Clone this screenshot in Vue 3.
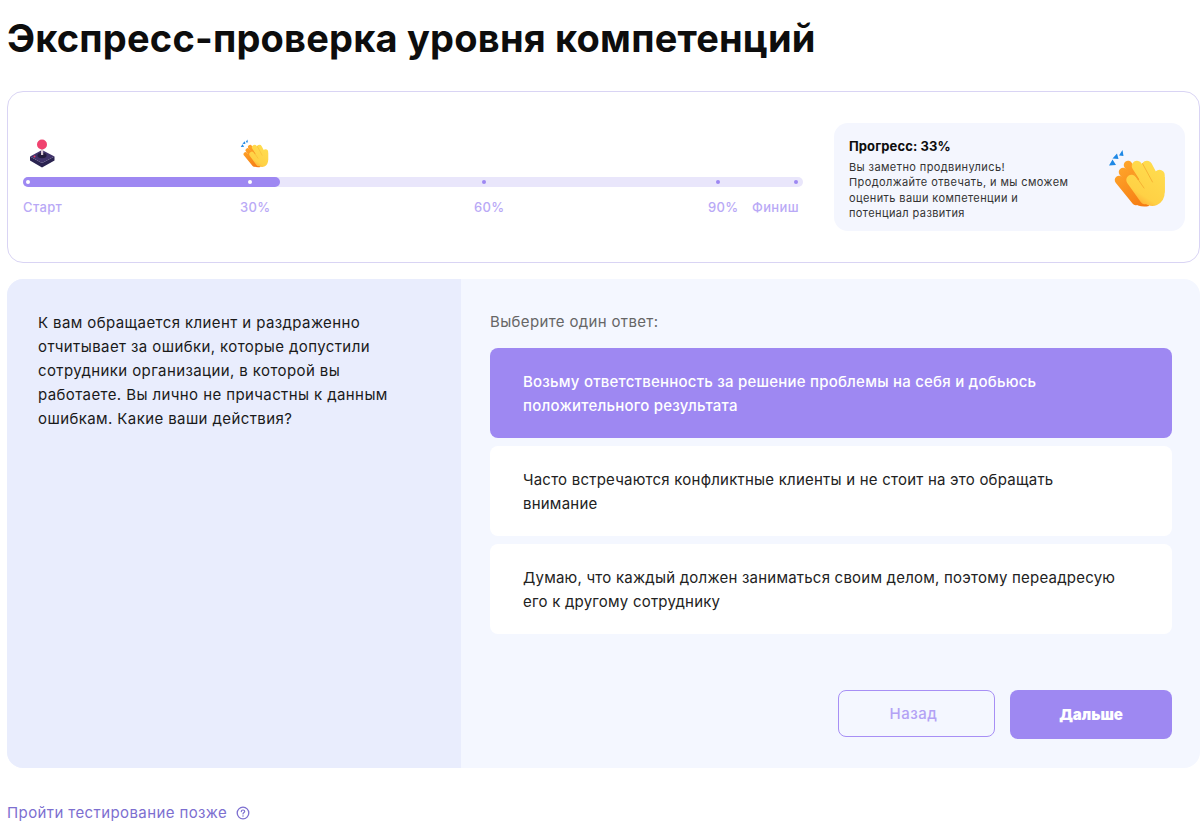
<template>
  <div class="page">
    <h1 class="title">Экспресс-проверка уровня компетенций</h1>

    <section class="progress-card">
      <div class="progress-main">
        <div class="marks">
          <svg class="joystick" width="25" height="29" viewBox="0 0 25 29">
            <path d="M0 17.500V21.500L12 28.500L24.500 21.500V17.500L12 24Z" fill="#2a2350" />
            <path d="M12 11L24.500 17.500L12 24L0 17.500Z" fill="#40336b" />
            <ellipse cx="12" cy="16.500" rx="4.500" ry="2.800" fill="#221b3d" />
            <rect x="11" y="9" width="2.200" height="7" fill="#d9c8d6" />
            <circle cx="4.500" cy="17.500" r="1" fill="#e8385f" />
            <circle cx="12" cy="5.500" r="5" fill="#f0436f" />
          </svg>
          <svg class="clap-small" width="30" height="29" viewBox="13 8 60 59">
            <defs>
              <linearGradient id="clapBack" gradientUnits="userSpaceOnUse" x1="22" y1="25" x2="52" y2="65">
                <stop offset="0" stop-color="#ffa62b" />
                <stop offset="1" stop-color="#f57a12" />
              </linearGradient>
              <linearGradient id="clapFront" gradientUnits="userSpaceOnUse" x1="64" y1="26" x2="38" y2="66">
                <stop offset="0" stop-color="#ffdc4e" />
                <stop offset="0.68" stop-color="#ffd145" />
                <stop offset="1" stop-color="#ff982c" />
              </linearGradient>
            </defs>
            <g id="clap">
              <path d="M14 24.500L21 24L17.500 18.500Z M17.500 17.500L23.500 18L22 12.500Z M24 14.500L28.500 15L27.500 9Z" fill="#1e88e5" />
              <g stroke="url(#clapBack)" stroke-width="8.500" stroke-linecap="round" fill="none">
                <path d="M33 24L47 44" />
                <path d="M28 31L43 50" />
                <path d="M24 39L41 60" />
              </g>
              <path d="M24 42L38 61Q44 67 54 65L50 34L36 32Z" fill="url(#clapBack)" />
              <g stroke="url(#clapFront)" stroke-width="10.500" stroke-linecap="round" fill="none">
                <path d="M42 25L54 44" />
                <path d="M52 25L62 44" />
                <path d="M64.500 34V50" />
                <path d="M36.500 39L50 58" />
              </g>
              <path d="M36 44L48 61Q55 67 62 64Q70 60 69.750 50L69.750 36L60 36L48 36Z" fill="url(#clapFront)" />
              <path d="M39 32.500L49 47M47.500 22.500L57.500 41" stroke="#f4a92f" stroke-width="0.800" stroke-linecap="round" fill="none" />
            </g>
          </svg>
        </div>

        <div class="track">
          <div class="track-fill"></div>
          <span
            v-for="dot in dots"
            :key="dot.x"
            class="dot"
            :class="{ passed: dot.passed }"
            :style="{ left: dot.x + 'px' }"
          ></span>
        </div>

        <div class="labels">
          <span>Старт</span>
          <span>30%</span>
          <span>60%</span>
          <span>90%</span>
          <span>Финиш</span>
        </div>
      </div>

      <aside class="progress-note">
        <div class="note-text">
          <h2>Прогресс: 33%</h2>
          <p>Вы заметно продвинулись!<br />Продолжайте отвечать, и мы сможем оценить ваши компетенции и потенциал развития</p>
        </div>
        <svg class="clap-big" width="60" height="59" viewBox="13 8 60 59">
          <use href="#clap" />
        </svg>
      </aside>
    </section>

    <section class="quiz">
      <div class="question">
        К вам обращается клиент и раздраженно отчитывает за ошибки, которые допустили сотрудники организации, в которой вы работаете. Вы лично не причастны к данным ошибкам. Какие ваши действия?
      </div>
      <div class="answers">
        <p class="hint">Выберите один ответ:</p>
        <div class="options">
          <div
            v-for="(option, i) in options"
            :key="i"
            class="option"
            :class="{ active: i === selected }"
            @click="selected = i"
          >
            {{ option }}
          </div>
        </div>
        <div class="actions">
          <button class="btn-back">Назад</button>
          <button class="btn-next">Дальше</button>
        </div>
      </div>
    </section>

    <a class="later">
      Пройти тестирование позже
      <svg width="14" height="14" viewBox="0 0 14 14" fill="none">
        <circle cx="7" cy="7" r="5.800" stroke="#7d6fd0" stroke-width="1.300" />
        <path d="M5.300 5.600C5.300 4.600 6 4 7 4C8 4 8.700 4.600 8.700 5.500C8.700 6.500 7 6.700 7 8" stroke="#7d6fd0" stroke-width="1.200" stroke-linecap="round" />
        <circle cx="7" cy="9.900" r="0.750" fill="#7d6fd0" />
      </svg>
    </a>
  </div>
</template>

<script setup>
import { ref } from "vue";

const selected = ref(0);

const dots = [
  { x: 3, passed: true },
  { x: 225, passed: true },
  { x: 459, passed: false },
  { x: 693, passed: false },
  { x: 771, passed: false },
];

const options = [
  "Возьму ответственность за решение проблемы на себя и добьюсь положительного результата",
  "Часто встречаются конфликтные клиенты и не стоит на это обращать внимание",
  "Думаю, что каждый должен заниматься своим делом, поэтому переадресую его к другому сотруднику",
];
</script>

<style>
html,
body {
  background: #fff;
  overflow: hidden;
}
</style>

<style scoped>
.page {
  height: 840px;
  box-sizing: border-box;
  padding: 16px 0 0 7px;
  font-family: Inter, "Noto Sans", sans-serif;
  color: #111;
}

.title {
  margin: 0 0 31px;
  font-size: 38px;
  line-height: 44px;
  font-weight: 700;
  letter-spacing: 0.2px;
  color: #0d0d0d;
}

.progress-card {
  display: flex;
  align-items: flex-start;
  height: 172px;
  box-sizing: border-box;
  border: 1px solid #d9d4f4;
  border-radius: 16px;
  padding: 31px 0 0 15px;
}

.progress-main {
  width: 780px;
}

.marks {
  display: flex;
  align-items: flex-end;
  height: 54px;
  padding: 0 0 9px 7px;
  box-sizing: border-box;
}

.clap-small {
  margin-left: 185px;
}

.track {
  position: relative;
  height: 10px;
  border-radius: 5px;
  background: #e9e6fb;
}

.track-fill {
  width: 257px;
  height: 100%;
  border-radius: 5px;
  background: #9e88f2;
}

.dot {
  position: absolute;
  top: 3px;
  width: 4px;
  height: 4px;
  border-radius: 50%;
  background: #9e88f2;
}

.dot.passed {
  background: #fff;
}

.labels {
  display: grid;
  grid-template-columns: 217px 234px 234px 44px auto;
  margin-top: 12px;
  font-size: 13px;
  line-height: 16px;
  font-weight: 500;
  letter-spacing: 0.35px;
  color: #b9a9f6;
}

.progress-note {
  display: flex;
  align-items: center;
  justify-content: space-between;
  box-sizing: border-box;
  width: 351px;
  height: 108px;
  margin-left: 31px;
  padding: 0 17px 0 15px;
  border-radius: 14px;
  background: #f4f6fe;
}

.note-text {
  width: 225px;
  padding-top: 5px;
}

.note-text h2 {
  margin: 0 0 6px;
  font-size: 13px;
  line-height: 16px;
  font-weight: 700;
  letter-spacing: 0.1px;
  color: #0d0d0d;
}

.note-text p {
  margin: 0;
  font-size: 11px;
  line-height: 15.500px;
  letter-spacing: 0.4px;
  color: #333;
}

.clap-big {
  margin-top: 2px;
}

.quiz {
  display: flex;
  height: 489px;
  margin-top: 16px;
  border-radius: 16px;
  overflow: hidden;
  background: #f4f7ff;
}

.question {
  width: 454px;
  box-sizing: border-box;
  flex-shrink: 0;
  padding: 32px 60px 0 31px;
  background: #e9edfd;
  font-size: 15px;
  line-height: 24px;
  letter-spacing: 0.4px;
  color: #1a1a1a;
}

.answers {
  flex: 1;
  display: flex;
  flex-direction: column;
  padding: 33px 28px 0 29px;
}

.hint {
  margin: 0 0 16px;
  font-size: 15px;
  line-height: 20px;
  letter-spacing: 0.35px;
  color: #666;
}

.options {
  display: flex;
  flex-direction: column;
  gap: 8px;
}

.option {
  box-sizing: border-box;
  height: 90px;
  padding: 22px 49px 0 33px;
  border-radius: 8px;
  background: #fff;
  font-size: 15px;
  line-height: 24px;
  letter-spacing: 0.22px;
  color: #222;
  cursor: pointer;
}

.option.active {
  background: #9e88f2;
  color: #fff;
  font-weight: 500;
}

.actions {
  display: flex;
  align-items: flex-start;
  justify-content: flex-end;
  gap: 15px;
  margin-top: 56px;
}

.actions button {
  border-radius: 8px;
  font-family: inherit;
  cursor: pointer;
}

.btn-back {
  width: 157px;
  height: 47px;
  padding: 0 6px 0 0;
  border: 1px solid #a78ff5;
  background: transparent;
  font-size: 15px;
  font-weight: 500;
  letter-spacing: 0.5px;
  color: #b3a2f5;
}

.btn-next {
  width: 162px;
  height: 49px;
  border: none;
  background: #9e88f2;
  font-size: 15px;
  font-weight: 900;
  color: #fff;
}

.later {
  display: flex;
  align-items: center;
  gap: 9px;
  margin-top: 35px;
  font-size: 15px;
  line-height: 20px;
  letter-spacing: 0.4px;
  color: #7d6fd0;
  cursor: pointer;
}
</style>
